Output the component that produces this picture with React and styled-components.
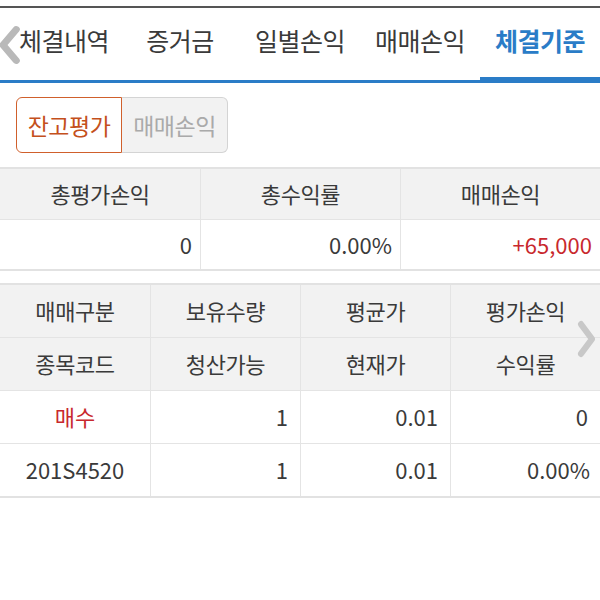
import React from "react";
import styled, { createGlobalStyle } from "styled-components";

const Global = createGlobalStyle`
  html, body { margin: 0; padding: 0; background: #fff; }
  body { font-family: "Noto Sans CJK KR", "Noto Sans", sans-serif; color: #333; }
  * { box-sizing: border-box; }
`;

const Page = styled.div`
  width: 600px;
  height: 600px;
  padding-top: 6px;
  background: #fff;
  overflow: hidden;
`;

const TabBar = styled.div`
  position: relative;
  display: flex;
  height: 77px;
  border-top: 2px solid #555;
  border-bottom: 3px solid #2a7cc7;
`;

const Tab = styled.div`
  position: relative;
  flex: 0 0 120px;
  display: flex;
  align-items: center;
  justify-content: center;
  font-size: 25px;
  letter-spacing: -0.5px;
  padding-bottom: 8px;
  padding-left: ${(p) => (p.$first ? 8 : 0)}px;
  white-space: nowrap;
  color: ${(p) => (p.$active ? "#2a7cc7" : "#3a3a3a")};
  font-weight: ${(p) => (p.$active ? 700 : 400)};
  &::after {
    content: "";
    display: ${(p) => (p.$active ? "block" : "none")};
    position: absolute;
    left: 0;
    right: 0;
    bottom: 0;
    height: 3px;
    background: #2a7cc7;
  }
`;

const LeftArrow = styled.div`
  position: absolute;
  left: -3px;
  top: 17px;
  width: 24px;
  height: 40px;
`;

const Segments = styled.div`
  display: flex;
  padding: 14px 16px 14px;
`;

const Seg = styled.div`
  width: 106px;
  height: 56px;
  display: flex;
  align-items: center;
  justify-content: center;
  font-size: 23px;
  letter-spacing: -0.5px;
  white-space: nowrap;
  border: 1px solid ${(p) => (p.$active ? "#d0602c" : "#d4d4d4")};
  background: ${(p) => (p.$active ? "#fff" : "#f2f2f2")};
  color: ${(p) => (p.$active ? "#c4501c" : "#aaa")};
  border-radius: ${(p) => (p.$active ? "6px 0 0 6px" : "0 6px 6px 0")};
  border-left-width: ${(p) => (p.$active ? "1px" : "0")};
`;

const Table = styled.div`
  display: grid;
  grid-template-columns: repeat(${(p) => p.$cols}, 1fr);
  border-top: 2px solid #e2e2e2;
  border-bottom: 2px solid #e2e2e2;
  margin-bottom: ${(p) => p.$mb || 0}px;
  position: relative;
`;

const Cell = styled.div`
  height: ${(p) => p.$h}px;
  display: flex;
  align-items: center;
  justify-content: ${(p) => (p.$right ? "flex-end" : "center")};
  padding: 0 ${(p) => p.$pr || 8}px 2px 8px;
  font-size: 22px;
  letter-spacing: ${(p) => (p.$head ? "-0.4px" : "0")};
  white-space: nowrap;
  background: ${(p) => (p.$head ? "#f2f2f2" : "#fff")};
  color: ${(p) => p.$color || "#3a3a3a"};
  border-left: ${(p) => (p.$first ? "none" : "1px solid #e4e4e4")};
  border-top: ${(p) => (p.$top ? "1px solid #e4e4e4" : "none")};
`;

const RightArrow = styled.div`
  position: absolute;
  right: 3px;
  top: 35px;
  width: 20px;
  height: 38px;
`;

const Chevron = ({ dir, color }) => (
  <svg width="100%" height="100%" viewBox="0 0 20 36" preserveAspectRatio="none">
    <polyline
      points={dir === "left" ? "16,4 5,18 16,32" : "4,4 15,18 4,32"}
      fill="none"
      stroke={color}
      strokeWidth="6"
      strokeLinecap="round"
      strokeLinejoin="round"
    />
  </svg>
);

const tabs = ["체결내역", "증거금", "일별손익", "매매손익", "체결기준"];

export default function App() {
  return (
    <Page>
      <Global />
      <TabBar>
        {tabs.map((t, i) => (
          <Tab key={t} $first={i === 0} $active={i === 4}>{t}</Tab>
        ))}
        <LeftArrow>
          <Chevron dir="left" color="#b9b9b9" />
        </LeftArrow>
      </TabBar>
      <Segments>
        <Seg $active>잔고평가</Seg>
        <Seg>매매손익</Seg>
      </Segments>
      <Table $cols={3} $mb={12}>
        <Cell $h={50} $head $first>총평가손익</Cell>
        <Cell $h={50} $head>총수익률</Cell>
        <Cell $h={50} $head>매매손익</Cell>
        <Cell $h={50} $first $right $top>0</Cell>
        <Cell $h={50} $right $top>0.00%</Cell>
        <Cell $h={50} $right $top $color="#c8282d">+65,000</Cell>
      </Table>
      <Table $cols={4}>
        <Cell $h={52} $head $first>매매구분</Cell>
        <Cell $h={52} $head>보유수량</Cell>
        <Cell $h={52} $head>평균가</Cell>
        <Cell $h={52} $head>평가손익</Cell>
        <Cell $h={53} $head $first $top>종목코드</Cell>
        <Cell $h={53} $head $top>청산가능</Cell>
        <Cell $h={53} $head $top>현재가</Cell>
        <Cell $h={53} $head $top>수익률</Cell>
        <Cell $h={53} $first $top $color="#c8282d">매수</Cell>
        <Cell $h={53} $right $top $pr={12}>1</Cell>
        <Cell $h={53} $right $top $pr={12}>0.01</Cell>
        <Cell $h={53} $right $top $pr={12}>0</Cell>
        <Cell $h={53} $first $top>201S4520</Cell>
        <Cell $h={53} $right $top $pr={12}>1</Cell>
        <Cell $h={53} $right $top $pr={12}>0.01</Cell>
        <Cell $h={53} $right $top $pr={10}>0.00%</Cell>
        <RightArrow>
          <Chevron dir="right" color="#c8c8c8" />
        </RightArrow>
      </Table>
    </Page>
  );
}
